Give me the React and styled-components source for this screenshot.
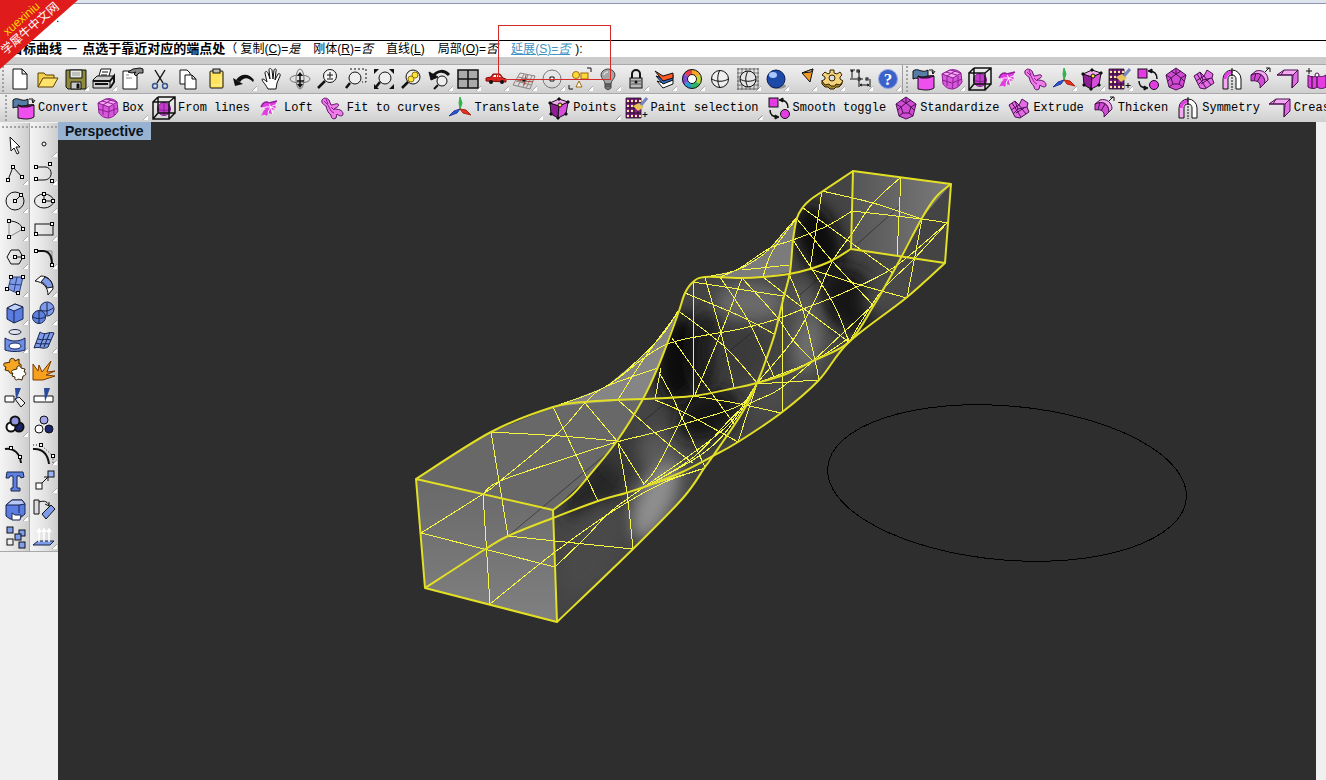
import React from 'react';
import styled, { createGlobalStyle } from 'styled-components';

const GlobalStyle = createGlobalStyle`
    * { box-sizing: border-box; }

    body {
        margin: 0;
        background: #f0f0f0;
        font-family: "Liberation Sans", "Noto Sans CJK SC", sans-serif;
        font-size: 12px;
        color: #000;
    }
`;

const Page = styled.div`
    position: relative;
    min-height: 100vh;
    display: flex;
    flex-direction: column;
    overflow: hidden;
`;

/* ---------- command area ---------- */

const TopEdge = styled.div`
    height: 4px;
    background: #dfe5ee;
    border-bottom: 1px solid #8c97ab;
`;

const History = styled.div`
    height: 36px;
    padding: 8px 0 0 56px;
    background: #fff;
    line-height: 12px;
`;

const Prompt = styled.form`
    display: flex;
    align-items: center;
    height: 17px;
    padding-left: 10px;
    border-top: 1px solid #000;
    background: #fff;
    line-height: 14px;
    white-space: pre;
`;

const PromptText = styled.label`
    font-size: 13px;
    font-weight: bold;
`;

const Option = styled.a`
    margin-right: ${props => props.$last ? '5px' : '13px'};
    color: ${props => props.$active ? '#3f93c4' : '#000'};
    text-decoration: ${props => props.$active ? 'underline' : 'none'};
`;

const CommandInput = styled.input`
    flex: 1;
    min-width: 0;
    height: 14px;
    border: 0;
    padding: 0;
    outline: 0;
    font: inherit;
`;

const Ribbon = styled.div`
    position: absolute;
    top: 0;
    left: 0;
    width: 78px;
    height: 69px;
    background: #e01b1b;
    clip-path: polygon(0 0, 100% 0, 0 100%);
`;

const RibbonText = styled.div`
    position: absolute;
    top: 11px;
    left: -24px;
    width: 100px;
    transform: rotate(-41deg);
    text-align: center;
    font-size: 12px;
    line-height: 13px;
    color: #fff;

    & b {
        display: block;
        font-weight: normal;
        color: #ffd800;
    }
`;

const Highlight = styled.div`
    position: absolute;
    left: 498px;
    top: 25px;
    width: 113px;
    height: 55px;
    border: 1px solid #d42a2a;
    pointer-events: none;
`;

/* ---------- toolbars ---------- */

const Gap = styled.div`
    height: 7px;
    background: #cbcbcb;
`;

const Bar = styled.div`
    display: flex;
    height: 29px;
    padding-left: ${props => props.$inset ? '3px' : '0'};
    border-top: 1px solid #a9a9a9;
    background: linear-gradient(#efefef, #e2e2e2 50%, #cfcfcf);
    overflow: hidden;
`;

const Grip = styled.div`
    flex: none;
    width: ${props => props.$flat ? 'auto' : '6px'};
    height: ${props => props.$flat ? '8px' : 'auto'};
    background: radial-gradient(circle, #a2a2a2 1px, transparent 1px);
    background-size: ${props => props.$flat ? '4px 8px' : '6px 4px'};
`;

const Divider = styled.div`
    flex: none;
    display: flex;
    width: 8px;
    padding-left: 1px;
    border-left: 1px solid #9d9d9d;
`;

const Tool = styled.button`
    position: relative;
    flex: none;
    display: flex;
    align-items: center;
    justify-content: ${props => props.$wide ? 'flex-start' : 'center'};
    width: ${props => props.$wide ? 'auto' : '28px'};
    height: 28px;
    padding: ${props => props.$wide ? '0 5px 0 3px' : '0'};
    border: 0;
    background: transparent;
    color: #000;
    font: 12px "Liberation Mono", monospace;
    white-space: nowrap;

    & svg {
        flex: none;
        margin-right: ${props => props.$wide ? '2px' : '0'};
    }

    &::after {
        content: '';
        display: ${props => props.$more ? 'block' : 'none'};
        position: absolute;
        right: 1px;
        bottom: 2px;
        width: 5px;
        height: 5px;
        background: linear-gradient(135deg, #888 55%, #fff 60%);
        clip-path: polygon(100% 0, 100% 100%, 0 100%);
    }
`;

/* ---------- body ---------- */

const Body = styled.div`
    flex: 1;
    display: flex;
    min-height: 0;
`;

const Sidebar = styled.div`
    display: flex;
    align-items: flex-start;
    padding-top: 1px;
    background: #f0f0f0;
`;

const Strip = styled.div`
    display: flex;
    flex-direction: column;
    padding-left: ${props => props.$end ? '0' : '1px'};
    border-right: ${props => props.$end ? '0' : '1px solid #a9a9a9'};
    border-bottom: 1px solid #a9a9a9;
    background: linear-gradient(90deg, #f4f4f4, #e4e4e4 50%, #cdcdcd);
`;

const Viewport = styled.main`
    position: relative;
    flex: 1;
    min-width: 0;
    margin-right: 10px;
    background: #2e2e2e;
`;

const ViewTitle = styled.button`
    position: absolute;
    left: 0;
    top: 0;
    height: 18px;
    padding: 0 7px;
    border: 0;
    background: #98b3d1;
    font: bold 14px "Liberation Sans", sans-serif;
    line-height: 16px;
    color: #0c1420;
`;

const Scene = styled.svg`
    position: absolute;
    inset: 0;
    width: 100%;
    height: 100%;
`;

/* ---------- icons ---------- */

const Nodes = ({ at, s = 3 }) => at.map(([x, y]) => (
    <rect key={x + '-' + y} x={x - s / 2} y={y - s / 2} width={s} height={s} fill="#fff" stroke="#000" />
));

const K = '#111';
const M = '#e23ce2';
const L = '#f5a8f2';
const D = '#8e1d96';
const B = '#7d9be8';

const icons = {
    file: <path d="M5 2h9l5 5v15H5zM14 2v5h5" fill="#fff" stroke={K} />,
    open: <g stroke="#5c4200"><path d="M2 20V6h6l2 2h8v3" fill="#f3cf4d" /><path d="M2 20l5-9h15l-5 9z" fill="#ffe36d" /></g>,
    save: <g stroke={K}><path d="M2 3h20v19H4l-2-2z" fill="#8f8a3c" /><path d="M6 3h12v8H6z" fill="#e8e8e0" /><path d="M7 15h10v7H7z" fill="#c9c9c9" /><path d="M8 6h8M8 8h8" stroke="#999" /><path d="M13 17h2v4h-2z" fill={K} /></g>,
    print: <g stroke={K}><path d="M6 12L9 2h10l-3 10z" fill="#fff" /><path d="M10 5h6M9 8h6" /><path d="M1 13l4-4h17l-4 5v7H1z" fill="#cfcfcf" /><path d="M1 14h17l4-5v6l-4 6M3 17h13" fill="none" strokeWidth="2" /></g>,
    props: <g stroke={K}><path d="M3 4h14v18H3z" fill="#fff" /><path d="M8 5l5-3 7-1 3 1v4h-4l-3 3-2-2 2-2-4 1z" fill="#888" /><path d="M6 8h3M6 11h6" stroke="#888" /></g>,
    cut: <g fill="none" stroke={K} strokeWidth="1.4"><path d="M7 3l8 13M17 3L9 16" /><circle cx="7" cy="19" r="2.5" stroke="#33508f" /><circle cx="17" cy="19" r="2.5" stroke="#33508f" /></g>,
    copy: <g fill="#fff" stroke={K}><path d="M4 3h7l3 3v11H4z" /><path d="M9 8h7l4 4v10H9zM16 8v4h4" /></g>,
    paste: <g stroke={K}><rect x="6" y="4" width="13" height="17" rx="1" fill="#ffe45c" /><rect x="9" y="2" width="7" height="4" fill="#bbb" /><path d="M8 18h9v-9" fill="none" stroke="#fff5a8" /></g>,
    undo: <g fill={K}><path d="M4 13C9 6 17 6 22 13l-1 2C16 10 12 10 8 15z" /><path d="M1 11l2 8 8-2z" /></g>,
    hand: <path d="M8 22C6 18 3 15 2 13c0-2 2-1 5 2L5 6c0-2 2-2 3 0l2 6-1-9c0-2 2-2 3 0l1 9 1-9c1-2 3-1 2 1l-1 9 3-6c1-1 3 0 2 2l-3 7-1 6z" fill="#fff" stroke={K} />,
    orbit: <g fill="none" stroke="#777"><ellipse cx="12" cy="12" rx="10" ry="4" /><ellipse cx="12" cy="12" rx="4" ry="10" /><path d="M12 9v8M9 14h7" stroke={K} strokeWidth="1.500" /><path d="M9 9l3-4 3 4zM9 17l3 4 3-4z" fill={K} stroke="none" /></g>,
    zoomIn: <g fill="#f4f4f4" stroke={K}><circle cx="14" cy="9" r="6.500" /><path d="M9 14l-7 7" strokeWidth="2.500" /><path d="M11 8h6M14 5v6M11 12h6" /></g>,
    zoomWin: <g fill="#eee" stroke={K}><path d="M6 2h16v13h-4" fill="none" strokeDasharray="2 2" /><circle cx="11" cy="11" r="6" /><path d="M6 16l-4 5" strokeWidth="2.500" /></g>,
    zoomExt: <g fill="#eee" stroke={K}><circle cx="13" cy="11" r="6" /><path d="M8 15l-4 5" strokeWidth="2.500" /><path d="M2 7V2h5zM17 2h5v5zM22 17v5h-5zM2 17v5h5z" fill={K} stroke="none" /></g>,
    zoomSel: <g stroke={K}><circle cx="13" cy="10" r="7" fill="#eee" /><circle cx="11" cy="12" r="3" fill="#ffe23c" stroke="#8a7400" /><circle cx="15" cy="8" r="3" fill="#ffe23c" stroke="#8a7400" /><path d="M8 15l-6 6" strokeWidth="2.500" /></g>,
    zoomUndo: <g stroke={K}><path d="M5 9c5-6 11-6 16-1" fill="none" strokeWidth="3" /><path d="M1 5l2 8 7-3z" fill={K} /><circle cx="14" cy="14" r="5" fill="#eee" /><path d="M10 18l-4 4" strokeWidth="2" /></g>,
    views: <path d="M2 3h20v18H2zM12 3v18M2 12h20" fill="#aaa" stroke={K} strokeWidth="1.500" />,
    car: <g><path d="M2 14v-3l5-1 2-3h7l3 4 3 1v3z" fill="#d8231d" stroke="#7d0d0d" /><path d="M9 10l1-2h2v2zM13 8h2l2 2h-4z" fill="#fff" /><circle cx="7" cy="15" r="2" fill={K} /><circle cx="18" cy="15" r="2" fill={K} /></g>,
    cplane: <g fill="none" stroke="#8d8580"><path d="M8 6l15 3-5 13-17-4zM6 10l15 3M4 14l15 4M12 7L6 19M16 8l-5 12M20 9l-6 12" /><path d="M5 13l16 2M12 18l2-10" stroke="#b03a2e" /><rect x="10" y="12" width="4" height="3" fill={K} /></g>,
    circleC: <g fill="none" stroke="#777"><circle cx="12" cy="12" r="9" /><path d="M10 10h4v4h-4z" fill="#fff" stroke={K} /></g>,
    objects: <g fill="#ffd83a" stroke="#a36b00"><circle cx="8" cy="8" r="3.500" /><rect x="13" y="6" width="7" height="6" /><path d="M11 14l3 6H8z" fill="#fff" /><path d="M19 1h4v4M1 18v4h4" fill="none" stroke={K} /></g>,
    bulb: <g stroke="#444"><path d="M9 17c0-4-4-5-4-9a7 6 0 0 1 14 0c0 4-4 5-4 9z" fill="#a5a5a5" /><path d="M9 17h6v4l-3 2-3-2zM9 19h6" fill="#777" /><path d="M8 8c0-2 2-3 4-3" fill="none" stroke="#fff" /></g>,
    lock: <g><path d="M8 11V7a4 4 0 0 1 8 0v4" fill="none" stroke={K} strokeWidth="2" /><rect x="6" y="11" width="12" height="10" fill="#b9b9b9" stroke={K} /><path d="M7 14h10M7 17h10" stroke="#555" /><circle cx="12" cy="15" r="1.500" fill={K} /></g>,
    layers: <g stroke={K}><path d="M5 14l6 7 10-4v-4l-10 3z" fill="#fff" /><path d="M4 9l7 8 10-4V8l-10 3z" fill="#2d6cc7" /><path d="M3 4l8 5 10-3v5l-10 3z" fill="#ff5a23" /></g>,
    wheel: <g fill="none" strokeWidth="5"><path d="M12 5a7 7 0 0 1 6 4" stroke="#f5a623" /><path d="M18 9a7 7 0 0 1 0 7" stroke="#b7d834" /><path d="M18 16a7 7 0 0 1-6 3" stroke="#31b566" /><path d="M12 19a7 7 0 0 1-6-3" stroke="#2a9bd8" /><path d="M6 16a7 7 0 0 1 0-8" stroke="#7a4fd0" /><path d="M6 8a7 7 0 0 1 6-3" stroke="#ea3a53" /><g stroke={K} strokeWidth="1"><circle cx="12" cy="12" r="9.500" /><circle cx="12" cy="12" r="4.500" fill="#fff" /></g></g>,
    wire: <g fill="#eee" stroke={K}><circle cx="12" cy="12" r="8.500" /><path d="M4 12c4 3 12 3 16 0M12 3c-3 5-3 12 0 18" fill="none" /></g>,
    wireGrid: <g stroke={K}><path d="M2 1v22M6 1v22M10 1v22M14 1v22M18 1v22M22 1v22M1 2h22M1 6h22M1 10h22M1 14h22M1 18h22M1 22h22" stroke="#444" strokeWidth="0.700" /><circle cx="12" cy="12" r="8" fill="#e5e5e5" /><path d="M4 12c4 3 12 3 16 0M12 4c-3 5-3 11 0 16" fill="none" /></g>,
    ball: <g><ellipse cx="14" cy="19" rx="8" ry="3" fill="#999" /><circle cx="12" cy="12" r="9" fill="#1d49a8" stroke="#0b1d52" /><ellipse cx="9" cy="8" rx="4" ry="3" fill="#a9c8ff" /></g>,
    cone: <g><path d="M10 6l11-4-3 13z" fill="#f49a26" stroke={K} /><path d="M10 6l9-1 2-3z" fill="#ffe0a5" stroke={K} /></g>,
    gear: <g stroke="#332200"><path d="M2 13v4l3 3h3l2 2h4l2-2h3l3-3v-4" fill="#a8862c" /><path d="M10 3h4v3l3 1 3-2 2 3-2 2v2l3 2-3 4-4-1-1 2h-4l-2-2-4 1-3-4 3-2v-2L2 8l3-3 3 2 2-1z" fill="#f3d27a" /><circle cx="12" cy="11" r="3" fill="#ddd" /></g>,
    dims: <g fill="none" stroke={K}><path d="M2 3h5M2 12h7M4 4v7M3 5l1-2 1 2M9 4h3M11 4v8h4M11 12v8M22 12v8M12 18h9M14 17l-2 1 2 1M19 17l2 1-2 1" /><Nodes at={[[10, 4], [11, 12], [19, 12]]} s={2} /></g>,
    help: <g><circle cx="12" cy="12" r="9.500" fill="#3c62c9" stroke="#8fa6e0" /><text x="12" y="18" textAnchor="middle" fontSize="17" fontWeight="bold" fontFamily="Liberation Serif" fill="#fff">?</text></g>,
    convert: <g stroke={K}><path d="M1 4c5-4 9 3 15-1v9c-5 3-9-3-15 0z" fill="#557da8" /><path d="M6 9c5 3 9-1 16 0v12c-5 3-10 2-16 1z" fill="#ee4fee" /><path d="M6 9c5 3 9-1 16 0l-6 2H9z" fill={D} /><path d="M17 3h4v4M20 4l1 3 2-3" fill="none" /></g>,
    box: <g stroke={D}><path d="M2 7l8-4c4-1 8 0 11 3l1 9c-2 4-5 6-9 7-4 0-7-1-10-5z" fill="#d45ad8" /><path d="M2 7l8-4 11 3-8 5z" fill={L} /><path d="M13 11c0 4 0 8-1 11M2 13l10 3 10-4M7 9v10M18 9v10M6 5l11 3M15 4L7 9" fill="none" /></g>,
    cage: <g stroke={K} fill="none"><circle cx="12" cy="13" r="6.500" fill="#c23dc9" stroke={D} /><path d="M6 13c4 2 9 2 13 0M12 7v13" stroke={D} /><path d="M1 6h16v17H1zM6 1h17v16H6M1 6l5-5M17 6l6-5M17 23l6-6M1 23l5-6V1" strokeWidth="1.500" /></g>,
    loft: <g><path d="M3 11c2-5 5-6 8-4l8-2-2 4 1 4-5 1 1 4-4-1-1 3c-2-2-4-1-6 0 2-3 2-6 5-7-2-1-3-2-5-2z" fill={M} /><path d="M11 7l4 11M17 9c-4 1-6 4-7 8M5 12c4-2 9-1 13 1" stroke="#fff" fill="none" /><path d="M3 11c2-5 5-6 8-4l8-2" stroke={D} strokeWidth="1.500" fill="none" /></g>,
    fit: <g><path d="M1 4c2-3 5-2 7 0l2 5c3 0 5-2 7-1 2 2-1 3-4 5 4 0 9 1 9 5 0 3-4 2-6 0l-1 4c-3 2-5 0-5-3-3-2-4-5-5-9-2-1-5-3-4-6z" fill="#f07bea" stroke="#5c1464" /><path d="M3 5l4 4c2 4 3 7 6 8M10 11l3 3M5 3l2 5" stroke={D} fill="none" /></g>,
    axes: <g><path d="M12 13L11 7l1-6 2 6z" fill="#2fb34a" stroke="#2fb34a" /><path d="M12 13l3 4 8 2-5-5z" fill="#e2321e" stroke="#b02412" /><path d="M12 13l-6 2-5 5 8-3z" fill="#2d55d0" stroke="#1f3ca0" /></g>,
    points: <g stroke={K}><path d="M3 7l9 3-1 12-7-4z" fill={D} /><path d="M12 10l9-4-2 12-8 4z" fill="#d94ddc" /><path d="M3 7l9-4 9 3-9 4z" fill={L} /><path d="M2 6h2v2H2zM11 2h2v2h-2zM20 5h2v2h-2zM3 17h2v2H3zM10 21h2v2h-2zM18 17h2v2h-2z" fill={K} /><circle cx="13" cy="9" r="2" fill="#ffe23c" /></g>,
    paint: <g><path d="M1 2h15v20H1z" fill={D} /><path d="M1 2h15v20H1zM5 2v20M9 2v20M13 2v20M1 7h15M1 12h15M1 17h15" fill="none" stroke={K} strokeWidth="0.800" /><path d="M2 4h2v2H2zM6 4h2v2H6zM10 4h2v2h-2zM14 4h2v2h-2zM2 9h2v2H2zM6 9h2v2H6zM2 14h2v2H2zM6 14h2v2H6zM2 19h2v2H2zM6 19h2v2H6zM10 19h2v2h-2zM14 19h2v2h-2z" fill="#ffe9a0" /><path d="M8 10l6-3 5 4-6 4z" fill="#e8c35a" /><path d="M16 9l6-7" stroke="#7587ba" strokeWidth="3" /><path d="M20 16v5M17.500 18.500h5" stroke={K} /></g>,
    smooth: <g stroke={K}><rect x="2" y="2" width="9" height="9" fill={M} /><circle cx="18" cy="18" r="4.500" fill={M} /><path d="M13 4c5 0 8 3 8 8M3 14c0 5 3 7 8 7" fill="none" strokeWidth="1.500" /><path d="M12 4l4-2v4zM12 21l-4-2v4z" fill={K} /></g>,
    penta: <g stroke="#4a1050"><path d="M12 1l10 7-3 12-7 3-7-3L2 8z" fill="#d04bd4" /><path d="M12 7l5 4-2 6H9l-2-6zM12 1v6M22 8l-5 3M2 8l5 3M5 20l4-3M19 20l-4-3M7 4l5 3 5-3M4 14l3-3M20 14l-3-3" fill="none" /></g>,
    extrude: <g stroke="#4a1050"><path d="M2 9l6-4 4 4 3-6 6 4-1 4 2 5-9 6-5-1z" fill="#e46be6" /><path d="M8 5l3 8 9-2M5 7l9 14M4 14l8-5M6 18l5-5M12 9l7 9M9 17l8-5" fill="none" /></g>,
    thicken: <g stroke="#4a1050"><path d="M3 8c8-4 14 0 14 8l-5 5c1-6-3-8-9-7z" fill="#d04bd4" /><path d="M3 8l5-4c7-2 12 3 12 9l-3 3c0-8-6-12-14-8z" fill={L} /><path d="M12 21l5-5M8 6l-2 8M13 8l-4 7" fill="none" /><path d="M17 5l4-4M18 1h4v4" stroke={K} fill="none" /></g>,
    symmetry: <g fill="none"><path d="M3 22V12a9 9 0 0 1 9-9v5c-3 0-4 2-4 4v10z" fill={L} stroke={K} /><path d="M21 22V12a9 9 0 0 0-9-9v5c3 0 4 2 4 4v10z" fill="#fff" stroke={K} /><path d="M12 1v22" stroke={K} strokeDasharray="2 1" /><path d="M5 12c0-4 3-6 6-7" stroke={M} strokeWidth="3" /></g>,
    crease: <g stroke="#4a1050"><path d="M1 8l7-5h14l-5 5z" fill={L} /><path d="M17 8l5-5v12l-6 6z" fill="#e06be2" /><path d="M1 8h15v13M8 3l-3 5" fill="none" /></g>,
    insert: <g stroke="#4a1050"><path d="M4 8c4 3 7 2 9 0 3 2 6 2 9 0v12c-3 2-6 2-9 0-2 2-6 2-9 0z" fill={M} /><path d="M13 8v12M8 9v12" stroke={K} fill="none" /><circle cx="13" cy="8" r="2" fill="#fff" /><path d="M5 1v6M2 4h6" stroke={K} /></g>,
};

const sideIcons = {
    select: <path d="M7 4l1 14 3-3 3 6 2-1-3-6h4z" fill="#fff" stroke={K} />,
    point: <circle cx="12" cy="11" r="2" fill="#eee" stroke={K} />,
    polyline: <g fill="none" stroke={K}><path d="M5 19l5-13 9 10" /><Nodes at={[[5, 19], [10, 6], [19, 16]]} /></g>,
    curve: <g fill="none" stroke={K}><path d="M4 6h8c9-1 10 13 0 13H4" /><Nodes at={[[4, 6], [18, 3], [4, 18], [20, 20]]} /></g>,
    circle: <g fill="none" stroke={K}><circle cx="12" cy="12" r="9" /><path d="M12 12l6-6" /><Nodes at={[[12, 12], [18, 6]]} /></g>,
    ellipse: <g fill="none" stroke={K}><ellipse cx="12" cy="12" rx="9.500" ry="7" /><path d="M12 5v7h9" /><Nodes at={[[12, 5], [12, 12], [21, 12]]} /></g>,
    arc: <g fill="none" stroke={K}><path d="M6 4c7 0 12 3 14 8" /><path d="M6 4v16l14-8" stroke="#888" /><Nodes at={[[6, 4], [20, 12], [6, 20]]} /></g>,
    rect: <g fill="none" stroke={K}><rect x="3" y="7" width="18" height="11" /><Nodes at={[[20, 7], [4, 17]]} /></g>,
    polygon: <g fill="none" stroke={K}><path d="M8 5h8l4 7-4 7H8l-4-7zM12 12h8" /><Nodes at={[[12, 12], [20, 12]]} /></g>,
    fillet: <g fill="none" stroke={K}><path d="M4 6h16v14" stroke="#888" /><path d="M4 6h7c6 0 9 4 9 14" strokeWidth="2" /><Nodes at={[[4, 6], [20, 20]]} /></g>,
    patch: <g stroke="#2d3f80"><path d="M8 4h12l-4 17-11-5z" fill={B} /><path d="M14 4l-3 14M6 11l12 1" fill="none" /><Nodes at={[[8, 4], [20, 4], [4, 16], [15, 20]]} /></g>,
    sweep: <g stroke={K}><path d="M3 8l6-5c7 0 12 5 12 13l-5 6c0-8-5-13-13-14z" fill="#fff" /><path d="M9 9l4-5c5 2 7 5 8 10l-6 1c-1-3-3-5-6-6z" fill={B} /></g>,
    cube: <g stroke="#17254f"><path d="M4 7l8-4 8 3v12l-9 4-7-4z" fill="#5b7ce0" /><path d="M4 7l8-4 8 3-9 4z" fill="#c3d2fa" /><path d="M11 10v12" /></g>,
    spheres: <g stroke="#17254f"><circle cx="15" cy="8" r="7" fill={B} /><circle cx="7" cy="16" r="6.500" fill="#5f80dd" /><path d="M1 16c4 2 8 2 12 0M9 9c4 2 8 1 12-2M7 10v12M15 2v12" fill="none" /></g>,
    project: <g stroke="#17254f"><ellipse cx="12" cy="3" rx="6" ry="2.500" fill="none" /><path d="M2 9c6 4 14 4 20 0v12c-6 2-14 2-20 0z" fill="#6d8de6" /><ellipse cx="12" cy="17" rx="6" ry="3" fill="#fff" /></g>,
    mesh: <g stroke="#17254f"><path d="M8 3c5 4 9-1 14 1l-6 14c-5 3-8-1-14 1z" fill={B} /><path d="M13 4L8 18M18 3l-6 15M6 10c5 2 8-1 13 1M4 14c5 2 8 0 13 1" fill="none" /></g>,
    puzzle: <g stroke="#3a2500"><path d="M3 6l4-1c-2-4 5-5 5-1l4-2v5c3-1 3 4 0 5l-1 3-4-1c0 4-5 3-5 0l-4-1 1-3c-3 0-3-5 0-4z" fill="#f5a623" /><path d="M10 13l4-1c-1-4 4-4 4-1l4 1-1 3c3 0 2 4-1 4l-1 4-4-1c-1 2-4 1-3-2l-3-1 1-3c-2 0-2-2 0-3z" fill="#fff" /></g>,
    explode: <path d="M1 23V7l5 7 1-6 3 7 9-11-4 11 8-1-9 4 9 1-12 4z" fill="#f7a01d" stroke="#7a3c00" />,
    trim: <g stroke={K}><path d="M2 11h9v6H2z" fill="#fff" /><path d="M12 14l4-2 6 6-4 4z" fill="#eee" /><path d="M12 3h6l-5 12z" fill="#2b4a9b" stroke="none" /></g>,
    split: <g stroke={K}><path d="M2 11h19v6H2z" fill="#fff" /><path d="M12 3h6l-5 14z" fill="#2b4a9b" stroke="none" /></g>,
    union: <g stroke={K} strokeWidth="2"><circle cx="16" cy="14" r="4.500" fill="#1c2570" /><circle cx="8" cy="14" r="4.500" fill="#fff" /><circle cx="12" cy="8" r="4.500" fill="#8f93dd" /></g>,
    group: <g stroke={K}><circle cx="12" cy="7" r="4" fill="#a5a5e8" /><circle cx="7" cy="16" r="4" fill="#fff" /><circle cx="17" cy="16" r="4" fill="#1c2570" /></g>,
    control: <g fill="none" stroke={K}><path d="M2 8c9-2 15 5 16 14" strokeWidth="2" /><Nodes at={[[8, 7], [17, 16]]} /></g>,
    edit: <g fill="none" stroke={K}><path d="M1 8c10-1 15 6 16 15" strokeWidth="2" /><path d="M1 4h8l12 11v8" strokeDasharray="1 2" /><Nodes at={[[9, 4], [21, 15]]} /></g>,
    text: <path d="M4 3h16l1 5-3 1-1-2h-3v12h3v3H8v-3h2V7H7L6 9H3z" fill="#5e80df" stroke="#17254f" />,
    move: <g stroke={K}><rect x="4" y="14" width="6" height="6" fill="#fff" /><rect x="16" y="2" width="6" height="6" fill="#9ab3f5" /><path d="M10 14l6-6M12 8h4v4" fill="none" /></g>,
    block: <g stroke="#17254f"><path d="M3 8l6-5h10l3 4v10l-6 5H7l-4-3z" fill="#5b7ce0" /><path d="M3 8h13l6-1-3-4H9z" fill="#b8c8f5" /><path d="M16 8v8" /><path d="M9 16l3 2h6l-1 5H9z" fill="#fff" /></g>,
    rotate: <g stroke={K}><path d="M2 3h5v14H2z" fill="#ddd" /><path d="M10 17l9-9 4 4-9 10z" fill={B} /><path d="M7 5c6-2 9 0 10 4M13 7l4 2V5" fill="none" /></g>,
    array: <g stroke={K} fill="#7f9ef0"><rect x="4" y="2" width="6" height="6" /><rect x="16" y="5" width="6" height="6" /><rect x="12" y="9" width="6" height="6" /><rect x="16" y="17" width="6" height="6" /><rect x="4" y="14" width="6" height="6" fill="#eee" /></g>,
    flow: <g><path d="M1 20l5-4h16l-4 4z" fill={B} stroke="#17254f" /><path d="M7 17V4M12 17V4M17 17V4M5 7l2-3 2 3M10 7l2-3 2 3M15 7l2-3 2 3" stroke="#fff" fill="none" strokeWidth="1.500" /></g>,
};

class Icon extends React.Component {
    render() {
        return (
            <svg width="24" height="24" viewBox="0 0 24 24" aria-hidden="true">
                {icons[this.props.name] || sideIcons[this.props.name]}
            </svg>
        );
    }
}

// a trailing + marks a button with a flyout
const mainTools = 'file open save+ print+ props cut copy paste undo+ hand orbit zoomIn zoomWin zoomExt zoomSel zoomUndo+ views+ car+ cplane+ circleC+ objects+ bulb+ lock+ layers+ wheel+ wire wireGrid+ ball+ cone+ gear+ dims+ help+'.split(' ');
const meshTools = 'convert box+ cage loft fit axes+ points+ paint+ smooth penta extrude symmetry thicken crease insert'.split(' ');
const leftTools = 'select polyline+ circle+ arc+ polygon+ patch+ cube+ project+ puzzle trim union+ control text block+ array'.split(' ');
const rightTools = 'point+ curve+ ellipse+ rect+ fillet+ sweep+ spheres+ mesh+ explode split group edit+ move+ rotate flow+'.split(' ');

const namedTools = [
    ['convert', 'Convert'],
    ['box', 'Box', true],
    ['cage', 'From lines'],
    ['loft', 'Loft'],
    ['fit', 'Fit to curves'],
    ['axes', 'Translate', true],
    ['points', 'Points', true],
    ['paint', 'Paint selection', true],
    ['smooth', 'Smooth toggle'],
    ['penta', 'Standardize'],
    ['extrude', 'Extrude'],
    ['thicken', 'Thicken'],
    ['symmetry', 'Symmetry'],
    ['crease', 'Crease'],
];

const options = [
    ['复制', 'C', '是'],
    ['刚体', 'R', '否'],
    ['直线', 'L'],
    ['局部', 'O', '否'],
    ['延展', 'S', '否'],
];

const ToolList = ({ tools }) => tools.map(tool => {
    const name = tool.replace('+', '');
    return (
        <Tool key={name} type="button" aria-label={name} $more={tool.endsWith('+')}>
            <Icon name={name} />
        </Tool>
    );
});

/* ---------- twisted box ---------- */

// smooth curve through a list of points
function spline(pts) {
    let d = `M${pts[0]}`;
    for (let i = 0; i < pts.length - 1; i++) {
        const a = pts[i - 1] || pts[i];
        const b = pts[i];
        const c = pts[i + 1];
        const e = pts[i + 2] || c;
        d += `C${b[0] + (c[0] - a[0]) / 6} ${b[1] + (c[1] - a[1]) / 6} ${c[0] - (e[0] - b[0]) / 6} ${c[1] - (e[1] - b[1]) / 6} ${c[0]} ${c[1]}`;
    }
    return d;
}

const edges = [
    [[416, 479], [491, 432], [553, 407], [585, 402], [615, 400], [643, 399], [693, 396], [735, 388], [757, 383], [786, 374], [813, 361], [849, 342], [874, 305], [897, 265], [922, 218], [936, 197], [951, 184]],
    [[553, 510], [572, 495], [588, 477], [617, 441], [643, 399], [658, 367], [670, 336], [679, 311], [685, 293], [693, 282], [705, 277], [742, 278], [763, 277], [789, 274], [810, 269], [831, 261], [851, 249]],
    [[557, 622], [633, 549], [683, 498], [705, 467], [713, 456], [742, 413], [757, 383], [767, 357], [775, 333], [783, 300], [790, 272], [793, 240], [797, 218], [803, 207], [810, 200], [823, 191], [853, 171]],
    [[425, 588], [484, 550], [508, 536], [553, 518], [598, 501], [626, 493], [647, 486], [680, 473], [713, 456], [738, 442], [781, 413], [819, 380], [849, 342], [906, 298], [945, 263]],
];

const frames = [
    'M416 479L553 510L557 622L425 588Z',
    'M853 171L951 184L945 263L851 249Z',
];

const thin = [
    [[553, 407], [605, 387], [640, 358], [663, 334], [678, 311]],
    [[705, 277], [737, 270], [765, 253], [784, 232], [797, 217]],
    [[483, 494], [490, 604]],
    [[421, 533], [555, 567]],
    [[491, 432], [508, 536]],
    [[491, 432], [560, 436], [617, 441]],
    [[553, 407], [598, 501]],
    [[421, 533], [483, 494], [500, 481], [560, 431], [585, 403], [605, 387], [658, 368]],
    [[483, 494], [500, 481], [567, 458], [617, 442], [657, 432], [697, 420], [740, 405], [757, 384]],
    [[553, 407], [605, 387], [648, 355], [677, 341], [740, 329], [777, 319], [803, 309], [843, 293], [893, 268], [947, 223]],
    [[585, 403], [617, 441]],
    [[618, 400], [667, 443], [693, 463]],
    [[618, 400], [632, 377], [648, 353], [679, 311]],
    [[618, 443], [627, 493], [633, 549]],
    [[618, 443], [644, 484]],
    [[508, 536], [555, 541], [633, 549]],
    [[555, 567], [587, 536], [610, 512], [647, 485], [693, 453], [730, 423], [757, 383]],
    [[490, 604], [555, 552], [613, 511], [663, 483], [705, 468]],
    [[647, 486], [705, 468]],
    [[647, 486], [695, 456], [740, 410], [778, 390], [813, 361]],
    [[647, 486], [705, 452], [735, 420], [757, 383]],
    [[661, 368], [655, 399]],
    [[659, 372], [673, 398], [682, 418], [705, 467]],
    [[693, 396], [682, 418], [657, 467], [643, 485]],
    [[655, 400], [685, 413], [738, 442]],
    [[693, 396], [735, 403], [781, 413]],
    [[693, 282], [693, 396]],
    [[672, 338], [702, 380], [735, 425]],
    [[680, 312], [725, 347], [757, 383]],
    [[685, 293], [740, 316], [774, 334]],
    [[693, 282], [783, 296]],
    [[705, 278], [721, 333], [734, 387]],
    [[742, 278], [733, 302], [720, 335], [695, 395]],
    [[720, 277], [745, 315], [760, 345], [774, 377]],
    [[742, 278], [777, 317], [793, 340], [813, 361]],
    [[763, 277], [803, 308], [849, 342]],
    [[789, 274], [802, 307], [815, 360], [819, 380]],
    [[783, 297], [782, 413]],
    [[757, 384], [819, 380]],
    [[757, 384], [750, 405], [738, 442]],
    [[793, 240], [833, 303], [849, 342]],
    [[797, 219], [813, 238], [833, 262], [873, 305]],
    [[803, 208], [893, 273]],
    [[822, 191], [810, 269]],
    [[822, 191], [873, 203], [922, 219]],
    [[852, 211], [922, 219], [948, 223]],
    [[901, 177], [897, 256]],
    [[901, 177], [873, 203], [853, 232], [832, 262], [815, 300], [793, 340], [757, 383]],
    [[852, 211], [827, 226], [793, 240], [770, 248], [740, 268], [720, 277]],
    [[742, 270], [789, 265]],
    [[763, 277], [772, 252], [797, 218]],
    [[810, 269], [857, 284], [907, 298]],
    [[922, 219], [907, 298]],
    [[947, 223], [913, 260], [880, 293], [849, 342]],
    [[757, 383], [813, 361], [849, 338]],
    [[813, 361], [873, 305]],
];

const outline = 'M416 479L491 432L553 407L605 387L640 358L663 334L678 311L685 293L693 282L705 277L737 270L765 253L784 232L797 217L803 207L823 191L853 171L951 184L945 263L906 298L849 342L819 380L781 413L738 442L713 456L683 498L633 549L557 622L425 588Z';

// cx, cy, rx, ry, fill, tilt
const shades = [
    [596, 488, 40, 22, '#252525', -45],
    [630, 455, 22, 22, '#383838', -45],
    [658, 452, 20, 22, '#585858', -45],
    [708, 415, 34, 24, '#181818', -30],
    [655, 500, 18, 42, '#8e8e8e', 25],
    [590, 550, 26, 50, '#484848', 25],
    [680, 360, 24, 46, '#080808', 5],
    [706, 350, 16, 40, '#1e1e1e', 5],
    [750, 303, 34, 20, '#6a6a6a', 0],
    [740, 352, 26, 28, '#3a3a3a', 20],
    [775, 395, 30, 14, '#4c4c4c', -35],
    [808, 340, 14, 34, '#6f6f6f', 8],
    [818, 240, 22, 40, '#0e0e0e', -20],
    [850, 300, 28, 36, '#141414', -35],
    [805, 305, 12, 24, '#5a5a5a', -12],
    [890, 285, 20, 36, '#4a4a4a', 35],
];

class Model extends React.Component {
    render() {
        return (
            <Scene viewBox="58 122 1258 658" preserveAspectRatio="xMinYMin slice" aria-label="Perspective view">
                <defs>
                    <clipPath id="body"><path d={outline} /></clipPath>
                    <filter id="soft" x="-50%" y="-50%" width="200%" height="200%"><feGaussianBlur stdDeviation="8" /></filter>
                    <linearGradient id="front" x1="0" y1="0" x2="0" y2="1">
                        <stop offset="0" stopColor="#696969" />
                        <stop offset="1" stopColor="#808080" />
                    </linearGradient>
                    <linearGradient id="back" x1="0" y1="0" x2="1" y2="0">
                        <stop offset="0" stopColor="#555" />
                        <stop offset="1" stopColor="#7a7a7a" />
                    </linearGradient>
                </defs>
                <g clipPath="url(#body)">
                    <path d={outline} fill="#444" />
                    {shades.map(([cx, cy, rx, ry, fill, tilt], i) => (
                        <ellipse key={i} cx={cx} cy={cy} rx={rx} ry={ry} fill={fill} transform={`rotate(${tilt} ${cx} ${cy})`} filter="url(#soft)" />
                    ))}
                    <path d="M416 479L491 432L553 407L643 399L617 441L588 477L553 510Z" fill="#686868" />
                    <path d="M553 407L605 387L640 358L663 334L678 311L658 367L643 399Z" fill="#858585" />
                    <path d="M705 277L737 270L765 253L784 232L797 217L793 240L790 272L763 277Z" fill="#7b7b7b" />
                    <path d="M416 479L553 510L557 622L425 588Z" fill="url(#front)" />
                    <path d="M853 171L951 184L922 218L900 256L851 249Z" fill="url(#back)" />
                </g>
                <path d="M508 536L617 445M640 424L705 370M722 357L765 322M800 295L900 206" stroke="#222" strokeWidth="1" opacity="0.6" />
                <g fill="none" stroke="#f6f645" strokeWidth="1" shapeRendering="crispEdges">
                    {thin.map((pts, i) => <path key={i} d={spline(pts)} />)}
                </g>
                <g fill="none" stroke="#e3df25" strokeWidth="2" strokeLinejoin="round">
                    {edges.map((pts, i) => <path key={i} d={spline(pts)} />)}
                    {frames.map(d => <path key={d} d={d} />)}
                </g>
                <ellipse cx="1007" cy="483" rx="180" ry="77" transform="rotate(5 1007 483)" fill="none" stroke="#000" shapeRendering="crispEdges" />
            </Scene>
        );
    }
}

class App extends React.Component {
    render() {
        return (
            <Page>
                <GlobalStyle />
                <TopEdge />
                <History>:</History>
                <Prompt onSubmit={e => e.preventDefault()}>
                    <PromptText htmlFor="command">目标曲线 － 点选于靠近对应的端点处</PromptText>
                    <span>（ </span>
                    {options.map(([label, key, value], i) => (
                        <Option key={key} href={'#' + key} $active={key === 'S'} $last={i === options.length - 1}>
                            {label}(<u>{key}</u>){value && '='}{value && <i>{value}</i>}
                        </Option>
                    ))}
                    <span>):</span>
                    <CommandInput id="command" autoComplete="off" />
                </Prompt>
                <Gap />
                <Bar>
                    <Grip />
                    <ToolList tools={mainTools} />
                    <Divider><Grip /></Divider>
                    <ToolList tools={meshTools} />
                </Bar>
                <Bar $inset>
                    <Grip />
                    {namedTools.map(([icon, label, more]) => (
                        <Tool key={label} type="button" $wide $more={more}>
                            <Icon name={icon} />{label}
                        </Tool>
                    ))}
                </Bar>
                <Body>
                    <Sidebar>
                        <Strip>
                            <Grip $flat />
                            <ToolList tools={leftTools} />
                        </Strip>
                        <Strip $end>
                            <Grip $flat />
                            <ToolList tools={rightTools} />
                        </Strip>
                    </Sidebar>
                    <Viewport>
                        <Model />
                        <ViewTitle type="button">Perspective</ViewTitle>
                    </Viewport>
                </Body>
                <Ribbon>
                    <RibbonText><b>xuexiniu</b>学犀牛中文网</RibbonText>
                </Ribbon>
                <Highlight />
            </Page>
        );
    }
}

export default App;
